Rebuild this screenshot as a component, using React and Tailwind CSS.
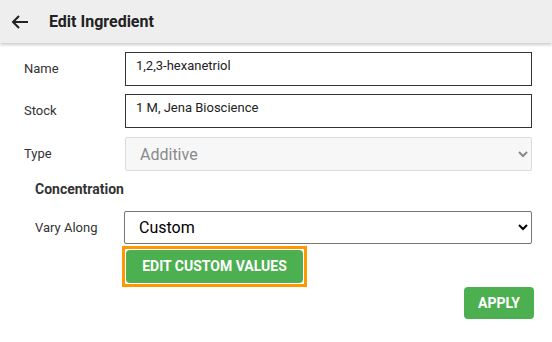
import React from "react";

const FieldRow = ({ label, children }) => (
  <div className="flex items-center">
    <div className="w-[101px] text-[13px] text-[#333]">{label}</div>
    <div className="flex-1">{children}</div>
  </div>
);

const ArrowLeft = () => (
  <svg width="18" height="14" viewBox="0 0 18 14" fill="none" stroke="#222" strokeWidth="2">
    <path d="M17 7H2" />
    <path d="M8 1L2 7l6 6" />
  </svg>
);

export default function App() {
  return (
    <div className="w-[552px] h-[342px] bg-white font-['Roboto',sans-serif] overflow-hidden">
      <div className="relative z-10 h-[43px] bg-[#eeeeee] shadow-[0_2px_3px_rgba(0,0,0,0.2)] flex items-center">
        <div className="w-[49px] pl-[11px] flex items-center">
          <ArrowLeft />
        </div>
        <h1 className="text-[16px] font-bold text-[#222]">Edit Ingredient</h1>
      </div>

      <div className="pl-[24px] pr-[20px]">
        <div className="mt-[9px]">
          <FieldRow label="Name">
            <input
              defaultValue="1,2,3-hexanetriol"
              className="w-full h-[34px] border border-[#333] px-[10px] pb-[8px] text-[13px] text-[#222] outline-none"
            />
          </FieldRow>
        </div>
        <div className="mt-[8px]">
          <FieldRow label="Stock">
            <input
              defaultValue="1 M, Jena Bioscience"
              className="w-full h-[34px] border border-[#333] px-[10px] pb-[8px] text-[13px] text-[#222] outline-none"
            />
          </FieldRow>
        </div>
        <div className="mt-[9px]">
          <FieldRow label="Type">
            <select
              disabled
              defaultValue="Additive"
              className="w-full h-[34px] border border-[#dcdcdc] rounded-[2px] bg-[#f7f7f7] px-[10px] text-[16px] text-[#8a8a8a]"
            >
              <option>Additive</option>
            </select>
          </FieldRow>
        </div>

        <div className="pl-[11px]">
          <h2 className="mt-[8px] text-[14px] leading-[20px] font-bold text-[#333]">Concentration</h2>
          <div className="mt-[12px] flex items-center">
            <div className="w-[89px] text-[13px] text-[#333]">Vary Along</div>
            <select
              defaultValue="Custom"
              className="flex-1 h-[33px] border border-[#767676] rounded-[2px] bg-white px-[10px] text-[16px] text-black"
            >
              <option>Custom</option>
              <option>Linear</option>
            </select>
          </div>
        </div>

        <div className="mt-[2px] ml-[98px] w-fit border-[3px] border-[#ff9800] p-[1px]">
          <button className="h-[33px] w-[177px] rounded-[4px] bg-[#4caf50] text-white text-[14px] font-bold">
            EDIT CUSTOM VALUES
          </button>
        </div>

        <div className="flex justify-end mr-[-2px]">
          <button className="h-[32px] w-[70px] rounded-[4px] bg-[#4caf50] text-white text-[14px] font-bold">
            APPLY
          </button>
        </div>
      </div>
    </div>
  );
}
